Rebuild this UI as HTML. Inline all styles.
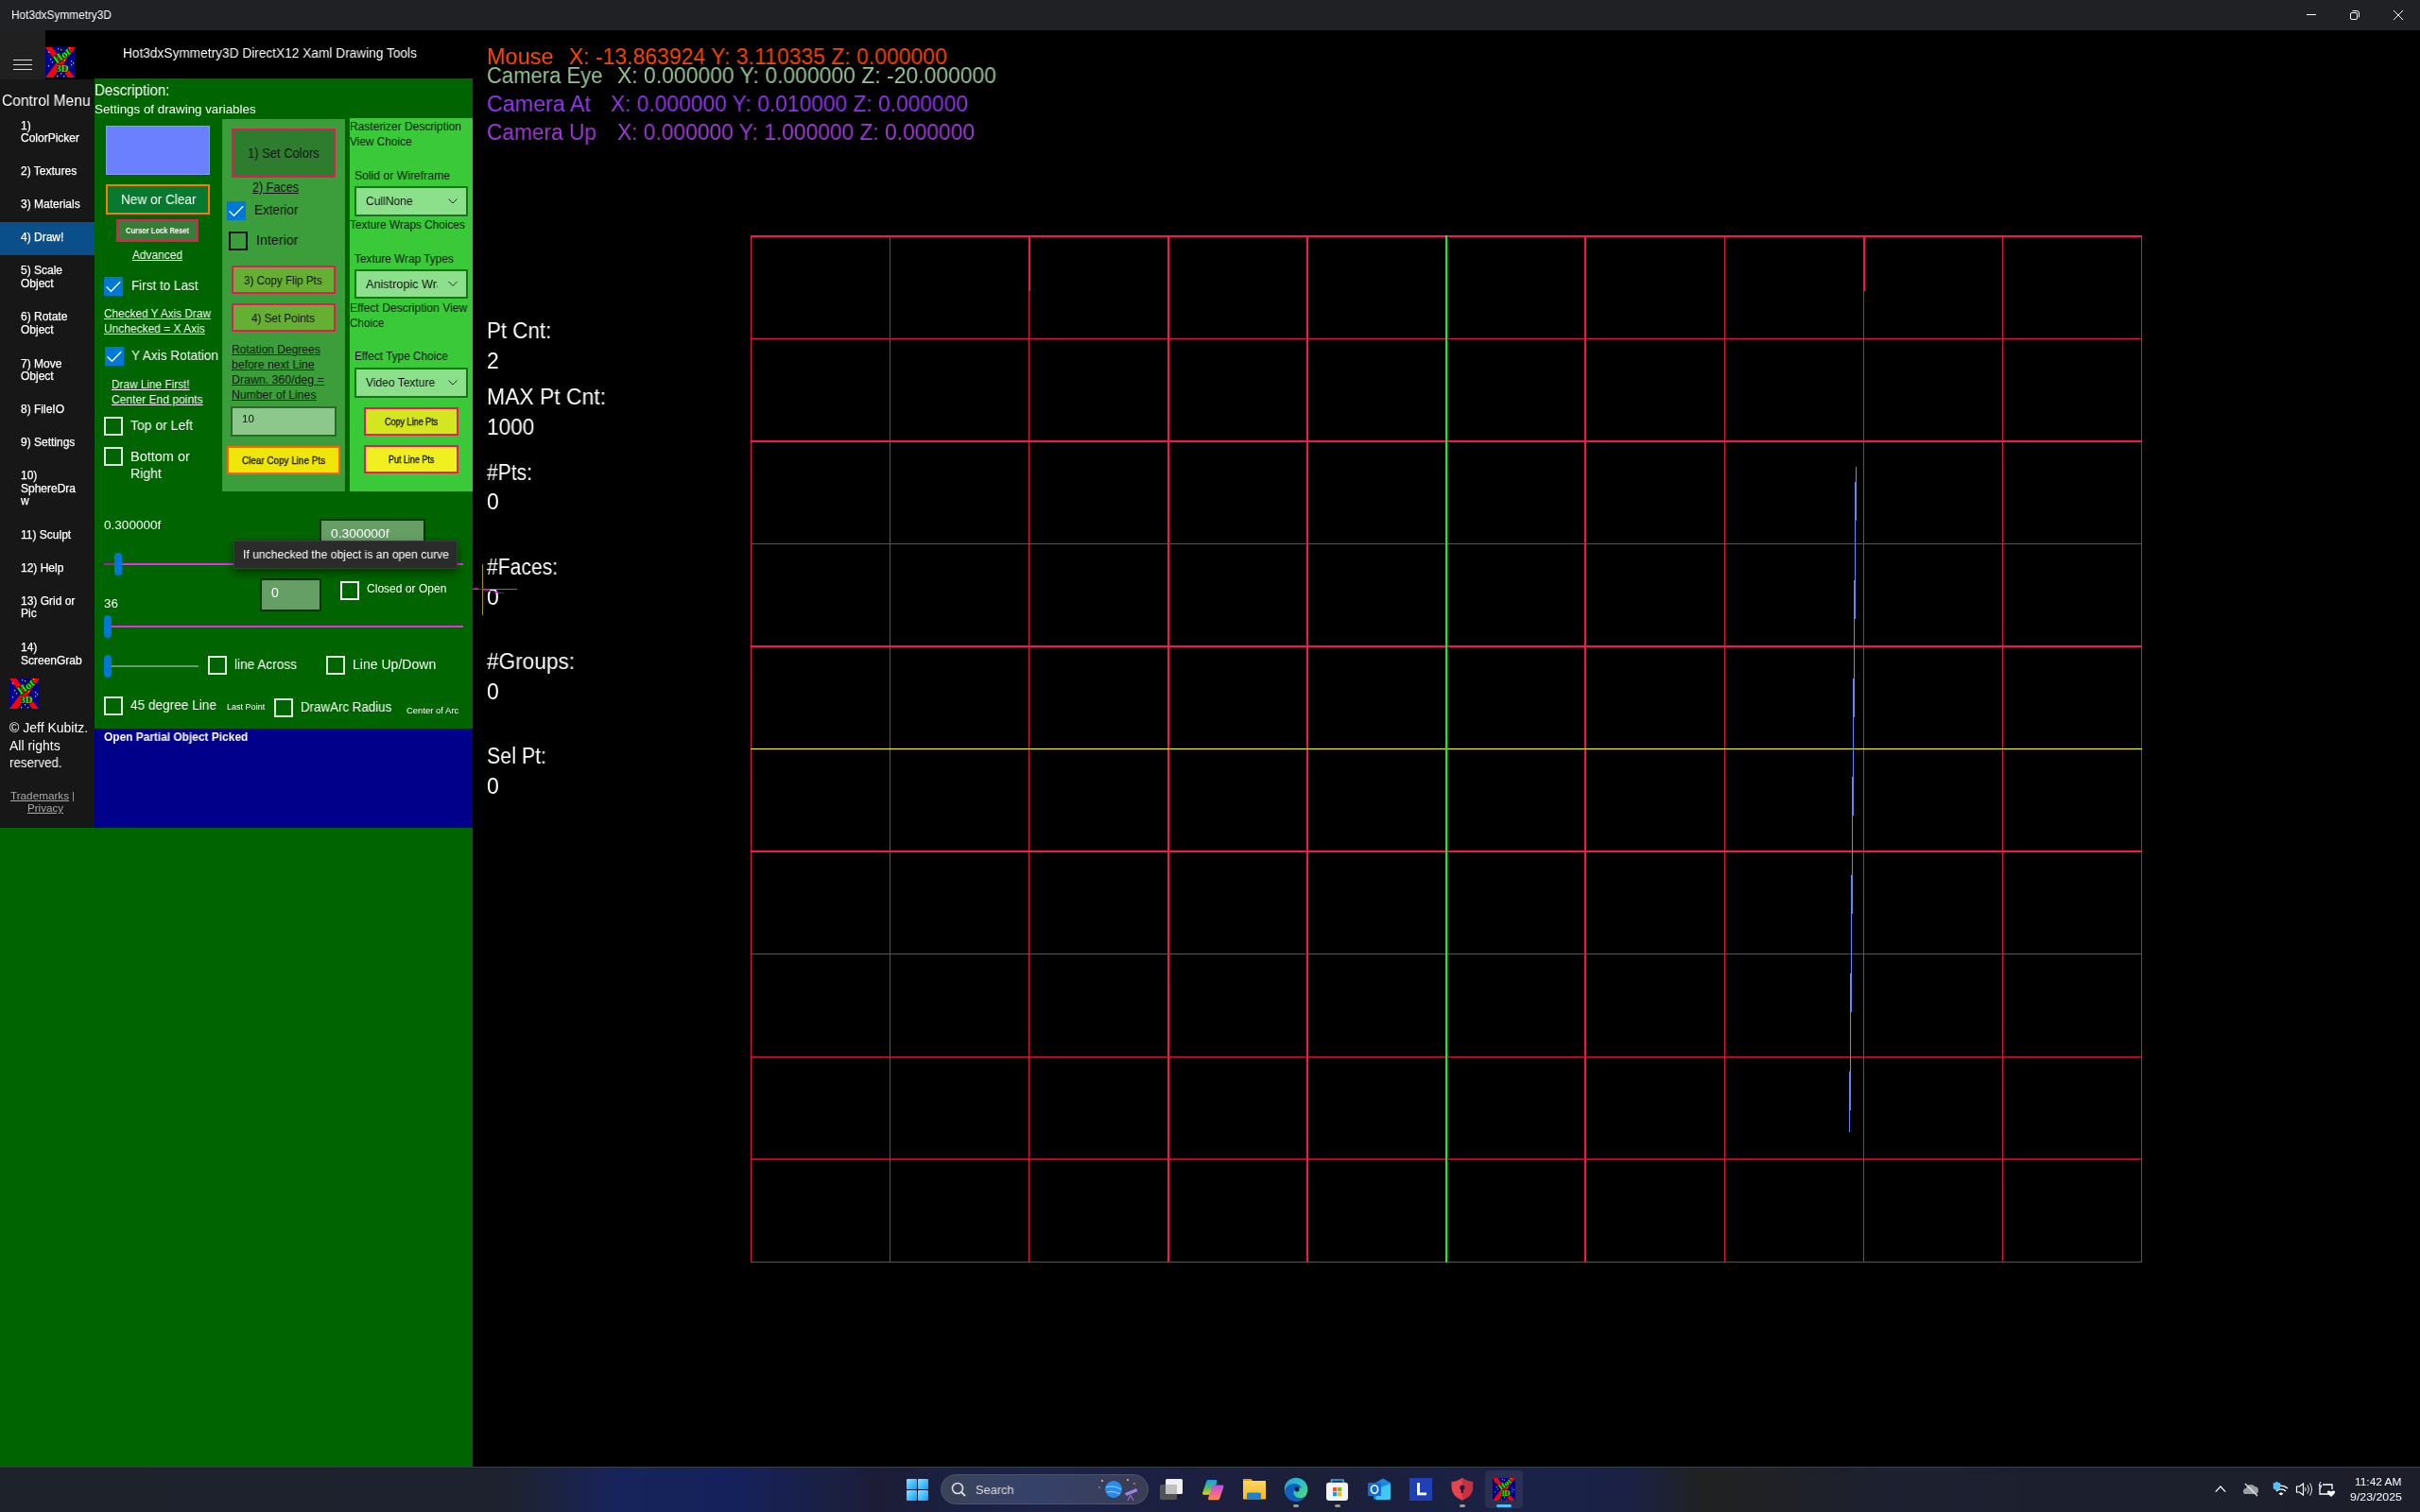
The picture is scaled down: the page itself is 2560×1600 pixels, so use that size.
<!DOCTYPE html><html><head><meta charset="utf-8"><style>
html,body{margin:0;padding:0;width:2560px;height:1600px;overflow:hidden;background:#000}
body{position:relative;font-family:"Liberation Sans",sans-serif}
.a{position:absolute}
.t{position:absolute;white-space:nowrap;line-height:1;transform-origin:0 0;will-change:transform}
</style></head><body>
<div class="a" style="left:0px;top:0px;width:2560px;height:32px;background:#202124"></div>
<div class="t" style="left:12px;top:10px;font-size:12.5px;color:#fff;transform:scaleX(0.9478);">Hot3dxSymmetry3D</div>
<svg class="a" style="left:2430px;top:0;width:130px;height:32px" viewBox="2430 0 130 32">
<line x1="2440" y1="15.5" x2="2450" y2="15.5" stroke="#fff" stroke-width="1"/>
<rect x="2486.5" y="13.5" width="7" height="7" rx="1.5" fill="none" stroke="#fff" stroke-width="1"/>
<path d="M2488.5 11.5 h4.5 a2.5 2.5 0 0 1 2.5 2.5 v4.5" fill="none" stroke="#fff" stroke-width="1"/>
<path d="M2532 11 L2542 21 M2542 11 L2532 21" stroke="#fff" stroke-width="1"/>
</svg>
<div class="a" style="left:0px;top:32px;width:48px;height:52px;background:#202020"></div>
<div class="a" style="left:0px;top:84px;width:100px;height:792px;background:#171717"></div>
<svg class="a" style="left:0;top:32px;width:48px;height:51px" viewBox="0 32 48 51">
<path d="M14 63.5 H34 M14 68.5 H34 M14 73.5 H34" stroke="#ddd" stroke-width="1"/></svg>
<svg class="a" style="left:48px;top:50px;width:32px;height:32px" viewBox="0 0 32 32">
<rect width="32" height="32" fill="#00008c"/>
<polygon points="0,0 7,0 31,32 24,32" fill="#ff0000"/>
<polygon points="24,0 32,0 8,32 0,32" fill="#ff0000"/>
<g fill="#ffee00"><circle cx="13.7" cy="1.8" r=".7"/><circle cx="16.7" cy="2.7" r=".7"/><circle cx="3.7" cy="5.3" r=".7"/><circle cx="3.5" cy="19.7" r=".7"/><circle cx="5.7" cy="12.8" r=".7"/><circle cx="7.5" cy="15.8" r=".7"/><circle cx="20.5" cy="13.7" r=".7"/><circle cx="27.7" cy="14.7" r=".7"/><circle cx="29.7" cy="16.7" r=".7"/><circle cx="27.7" cy="18.7" r=".7"/><circle cx="16.7" cy="27.7" r=".7"/><circle cx="12.7" cy="30.7" r=".7"/><circle cx="19.7" cy="30.7" r=".7"/><circle cx="25.7" cy="0.8" r=".7"/></g>
<g font-family="Liberation Serif" font-weight="bold" fill="#00ff00" stroke="#000" stroke-width="1" paint-order="stroke">
<text x="17.5" y="13" font-size="12" text-anchor="middle" transform="rotate(-35 17 9)">Hot</text>
<text x="18" y="25.5" font-size="11" text-anchor="middle" letter-spacing="-.2">3D</text>
</g>
</svg>
<div class="t" style="left:2px;top:99px;font-size:16px;color:#fff;transform:scaleX(0.9745);">Control Menu</div>
<div class="a" style="left:0px;top:235px;width:100px;height:35px;background:#0b4f8a"></div>
<div class="t" style="left:22px;top:127px;font-size:12px;color:#fff;-webkit-text-stroke:.25px #fff">1)</div>
<div class="t" style="left:22px;top:140px;font-size:12px;color:#fff;-webkit-text-stroke:.25px #fff">ColorPicker</div>
<div class="t" style="left:22px;top:175px;font-size:12px;color:#fff;-webkit-text-stroke:.25px #fff">2) Textures</div>
<div class="t" style="left:22px;top:210px;font-size:12px;color:#fff;-webkit-text-stroke:.25px #fff">3) Materials</div>
<div class="t" style="left:22px;top:245px;font-size:12px;color:#fff;-webkit-text-stroke:.25px #fff">4) Draw!</div>
<div class="t" style="left:22px;top:280px;font-size:12px;color:#fff;-webkit-text-stroke:.25px #fff">5) Scale</div>
<div class="t" style="left:22px;top:294px;font-size:12px;color:#fff;-webkit-text-stroke:.25px #fff">Object</div>
<div class="t" style="left:22px;top:329px;font-size:12px;color:#fff;-webkit-text-stroke:.25px #fff">6) Rotate</div>
<div class="t" style="left:22px;top:343px;font-size:12px;color:#fff;-webkit-text-stroke:.25px #fff">Object</div>
<div class="t" style="left:22px;top:379px;font-size:12px;color:#fff;-webkit-text-stroke:.25px #fff">7) Move</div>
<div class="t" style="left:22px;top:392px;font-size:12px;color:#fff;-webkit-text-stroke:.25px #fff">Object</div>
<div class="t" style="left:22px;top:427px;font-size:12px;color:#fff;-webkit-text-stroke:.25px #fff">8) FileIO</div>
<div class="t" style="left:22px;top:462px;font-size:12px;color:#fff;-webkit-text-stroke:.25px #fff">9) Settings</div>
<div class="t" style="left:22px;top:497px;font-size:12px;color:#fff;-webkit-text-stroke:.25px #fff">10)</div>
<div class="t" style="left:22px;top:511px;font-size:12px;color:#fff;-webkit-text-stroke:.25px #fff">SphereDra</div>
<div class="t" style="left:22px;top:524px;font-size:12px;color:#fff;-webkit-text-stroke:.25px #fff">w</div>
<div class="t" style="left:22px;top:560px;font-size:12px;color:#fff;-webkit-text-stroke:.25px #fff">11) Sculpt</div>
<div class="t" style="left:22px;top:595px;font-size:12px;color:#fff;-webkit-text-stroke:.25px #fff">12) Help</div>
<div class="t" style="left:22px;top:630px;font-size:12px;color:#fff;-webkit-text-stroke:.25px #fff">13) Grid or</div>
<div class="t" style="left:22px;top:643px;font-size:12px;color:#fff;-webkit-text-stroke:.25px #fff">Pic</div>
<div class="t" style="left:22px;top:679px;font-size:12px;color:#fff;-webkit-text-stroke:.25px #fff">14)</div>
<div class="t" style="left:22px;top:693px;font-size:12px;color:#fff;-webkit-text-stroke:.25px #fff">ScreenGrab</div>
<svg class="a" style="left:10px;top:718px;width:32px;height:32px" viewBox="0 0 32 32">
<rect width="32" height="32" fill="#00008c"/>
<polygon points="0,0 7,0 31,32 24,32" fill="#ff0000"/>
<polygon points="24,0 32,0 8,32 0,32" fill="#ff0000"/>
<g fill="#ffee00"><circle cx="13.7" cy="1.8" r=".7"/><circle cx="16.7" cy="2.7" r=".7"/><circle cx="3.7" cy="5.3" r=".7"/><circle cx="3.5" cy="19.7" r=".7"/><circle cx="5.7" cy="12.8" r=".7"/><circle cx="7.5" cy="15.8" r=".7"/><circle cx="20.5" cy="13.7" r=".7"/><circle cx="27.7" cy="14.7" r=".7"/><circle cx="29.7" cy="16.7" r=".7"/><circle cx="27.7" cy="18.7" r=".7"/><circle cx="16.7" cy="27.7" r=".7"/><circle cx="12.7" cy="30.7" r=".7"/><circle cx="19.7" cy="30.7" r=".7"/><circle cx="25.7" cy="0.8" r=".7"/></g>
<g font-family="Liberation Serif" font-weight="bold" fill="#00ff00" stroke="#000" stroke-width="1" paint-order="stroke">
<text x="17.5" y="13" font-size="12" text-anchor="middle" transform="rotate(-35 17 9)">Hot</text>
<text x="18" y="25.5" font-size="11" text-anchor="middle" letter-spacing="-.2">3D</text>
</g>
</svg>
<div class="t" style="left:10px;top:763px;font-size:14px;color:#fff;">&copy; Jeff Kubitz.</div>
<div class="t" style="left:10px;top:782px;font-size:14px;color:#fff;">All rights</div>
<div class="t" style="left:10px;top:800px;font-size:14px;color:#fff;transform:scaleX(0.9510);">reserved.</div>
<div class="t" style="left:11px;top:837px;font-size:11px;color:#aaa;text-decoration:underline;transform:scaleX(1.0640);">Trademarks</div>
<div class="t" style="left:76px;top:837px;font-size:11px;color:#aaa;">|</div>
<div class="t" style="left:29px;top:850px;font-size:11px;color:#aaa;text-decoration:underline;transform:scaleX(1.0537);">Privacy</div>
<div class="t" style="left:130px;top:49px;font-size:14px;color:#fff;transform:scaleX(0.9781);">Hot3dxSymmetry3D DirectX12 Xaml Drawing Tools</div>
<div class="a" style="left:100px;top:83px;width:400px;height:688px;background:#006400"></div>
<div class="a" style="left:100px;top:771px;width:400px;height:105px;background:#00008b"></div>
<div class="a" style="left:0px;top:876px;width:500px;height:676px;background:#006400"></div>
<div class="t" style="left:100px;top:88px;font-size:16px;color:#fff;transform:scaleX(0.9399);">Description:</div>
<div class="t" style="left:100px;top:109px;font-size:13px;color:#fff;transform:scaleX(1.0264);">Settings of drawing variables</div>
<div class="a" style="left:112px;top:133px;width:110px;height:52px;box-sizing:border-box;background:#6a80ff;border:1px solid #8a9cff"></div>
<div class="a" style="left:112px;top:195px;width:110px;height:32px;box-sizing:border-box;background:#087a30;border:2px solid #ff7800"></div>
<div class="t" style="left:127.5px;top:204px;font-size:14px;color:#fff;transform:scaleX(0.9732);">New or Clear</div>
<div class="a" style="left:123px;top:232px;width:87px;height:24px;box-sizing:border-box;background:#387d38;border:2px solid #e8185a"></div>
<div class="t" style="left:132.8px;top:240px;font-size:8.5px;color:#fff;font-weight:bold;transform:scaleX(0.8865);">Cursor Lock Reset</div>
<div class="t" style="left:140.4px;top:264px;font-size:12.5px;color:#fff;text-decoration:underline;transform:scaleX(0.9533);">Advanced</div>
<svg class="a" style="left:110px;top:293px;width:20px;height:20px" viewBox="0 0 20 20"><rect width="20" height="20" fill="#0078d7"/><path d="M2.6 10.4 L7.5 15.2 L17.2 5.3" fill="none" stroke="#fff" stroke-width="1.4"/></svg>
<div class="t" style="left:138.5px;top:295px;font-size:14.5px;color:#fff;transform:scaleX(0.9308);">First to Last</div>
<div class="t" style="left:110px;top:326px;font-size:12.5px;color:#fff;text-decoration:underline;transform:scaleX(0.9437);">Checked Y Axis Draw</div>
<div class="t" style="left:110px;top:342px;font-size:12.5px;color:#fff;text-decoration:underline;transform:scaleX(0.9577);">Unchecked = X Axis</div>
<svg class="a" style="left:111px;top:367px;width:20px;height:20px" viewBox="0 0 20 20"><rect width="20" height="20" fill="#0078d7"/><path d="M2.6 10.4 L7.5 15.2 L17.2 5.3" fill="none" stroke="#fff" stroke-width="1.4"/></svg>
<div class="t" style="left:139px;top:368px;font-size:15px;color:#fff;transform:scaleX(0.9068);">Y Axis Rotation</div>
<div class="t" style="left:118px;top:401px;font-size:12.5px;color:#fff;text-decoration:underline;transform:scaleX(0.9449);">Draw Line First!</div>
<div class="t" style="left:118px;top:417px;font-size:12.5px;color:#fff;text-decoration:underline;transform:scaleX(0.9654);">Center End points</div>
<div class="a" style="left:110px;top:441px;width:20px;height:20px;box-sizing:border-box;border:2px solid #dfe8df"></div>
<div class="t" style="left:138px;top:443px;font-size:14.5px;color:#fff;transform:scaleX(0.9633);">Top or Left</div>
<div class="a" style="left:110px;top:473px;width:20px;height:20px;box-sizing:border-box;border:2px solid #dfe8df"></div>
<div class="t" style="left:138px;top:476px;font-size:14.5px;color:#fff;transform:scaleX(0.9927);">Bottom or</div>
<div class="t" style="left:138px;top:494px;font-size:14.5px;color:#fff;transform:scaleX(0.9719);">Right</div>
<div class="a" style="left:235px;top:126px;width:130px;height:394px;background:#3b9e3b"></div>
<div class="a" style="left:245px;top:136px;width:110px;height:52px;box-sizing:border-box;background:#2e7d2e;border:2px solid #e8185a"></div>
<div class="t" style="left:262px;top:154px;font-size:15px;color:#111;transform:scaleX(0.8648);">1) Set Colors</div>
<div class="t" style="left:267px;top:191px;font-size:14px;color:#111;text-decoration:underline;transform:scaleX(0.8997);">2) Faces</div>
<svg class="a" style="left:240px;top:213px;width:20px;height:20px" viewBox="0 0 20 20"><rect width="20" height="20" fill="#0078d7"/><path d="M2.6 10.4 L7.5 15.2 L17.2 5.3" fill="none" stroke="#fff" stroke-width="1.4"/></svg>
<div class="t" style="left:268.7px;top:215px;font-size:14.5px;color:#111;transform:scaleX(0.9268);">Exterior</div>
<div class="a" style="left:242px;top:245px;width:20px;height:20px;box-sizing:border-box;border:2px solid #111"></div>
<div class="t" style="left:270.5px;top:247px;font-size:14.5px;color:#111;transform:scaleX(0.9860);">Interior</div>
<div class="a" style="left:245px;top:281px;width:110px;height:30px;box-sizing:border-box;background:#65b033;border:2px solid #e8185a"></div>
<div class="t" style="left:258.4px;top:290px;font-size:13px;color:#111;transform:scaleX(0.8943);">3) Copy Flip Pts</div>
<div class="a" style="left:245px;top:321px;width:110px;height:30px;box-sizing:border-box;background:#65b033;border:2px solid #e8185a"></div>
<div class="t" style="left:266px;top:330px;font-size:13px;color:#111;transform:scaleX(0.8989);">4) Set Points</div>
<div class="t" style="left:245px;top:364px;font-size:12.5px;color:#111;text-decoration:underline;transform:scaleX(0.9642);">Rotation Degrees</div>
<div class="t" style="left:245px;top:380px;font-size:12.5px;color:#111;text-decoration:underline;transform:scaleX(0.9760);">before next Line</div>
<div class="t" style="left:245px;top:396px;font-size:12.5px;color:#111;text-decoration:underline;transform:scaleX(0.9876);">Drawn. 360/deg =</div>
<div class="t" style="left:245px;top:412px;font-size:12.5px;color:#111;text-decoration:underline;transform:scaleX(0.9759);">Number of Lines</div>
<div class="a" style="left:244px;top:430px;width:112px;height:32px;box-sizing:border-box;background:#8cc88c;border:2px solid #2a6a2a"></div>
<div class="t" style="left:256px;top:438px;font-size:11.5px;color:#111;">10</div>
<div class="a" style="left:240px;top:472px;width:120px;height:30px;box-sizing:border-box;background:#f0e60a;border:2px solid #ff6208"></div>
<div class="t" style="left:256px;top:482px;font-size:10.5px;color:#111;transform:scaleX(0.9424);-webkit-text-stroke:.3px #111">Clear Copy Line Pts</div>
<div class="a" style="left:370px;top:125px;width:130px;height:395px;background:#39c939"></div>
<div class="t" style="left:370px;top:128px;font-size:12.5px;color:#111;transform:scaleX(0.9597);">Rasterizer Description</div>
<div class="t" style="left:370px;top:144px;font-size:12.5px;color:#111;transform:scaleX(0.9487);">View Choice</div>
<div class="t" style="left:375px;top:180px;font-size:12.5px;color:#111;transform:scaleX(0.9758);">Solid or Wireframe</div>
<div class="a" style="left:375px;top:197px;width:120px;height:32px;box-sizing:border-box;background:#8ce08c;border:2px solid #1c721c"></div>
<div class="t" style="left:387px;top:206px;font-size:13px;color:#111;transform:scaleX(0.9275);">CullNone</div>
<svg class="a" style="left:470px;top:197px;width:20px;height:32px" viewBox="0 0 20 32"><path d="M4.5 13.5 L9 18.0 L13.5 13.5" fill="none" stroke="#243024" stroke-width="1"/></svg>
<div class="t" style="left:370px;top:232px;font-size:12.5px;color:#111;transform:scaleX(0.9443);">Texture Wraps Choices</div>
<div class="t" style="left:375px;top:268px;font-size:12.5px;color:#111;transform:scaleX(0.9467);">Texture Wrap Types</div>
<div class="a" style="left:375px;top:285px;width:120px;height:31px;box-sizing:border-box;background:#8ce08c;border:2px solid #1c721c"></div>
<div class="a" style="left:387px;top:285px;width:76px;height:31px;overflow:hidden">
<div class="t" style="left:0px;top:9px;font-size:13px;color:#111;transform:scaleX(0.9725);">Anistropic Wrap</div>
</div>
<svg class="a" style="left:470px;top:285px;width:20px;height:31px" viewBox="0 0 20 31"><path d="M4.5 13.0 L9 17.5 L13.5 13.0" fill="none" stroke="#243024" stroke-width="1"/></svg>
<div class="t" style="left:370px;top:320px;font-size:12.5px;color:#111;transform:scaleX(0.9705);">Effect Description View</div>
<div class="t" style="left:370px;top:336px;font-size:12.5px;color:#111;transform:scaleX(0.9329);">Choice</div>
<div class="t" style="left:375px;top:371px;font-size:12.5px;color:#111;transform:scaleX(0.9458);">Effect Type Choice</div>
<div class="a" style="left:375px;top:389px;width:120px;height:32px;box-sizing:border-box;background:#8ce08c;border:2px solid #1c721c"></div>
<div class="t" style="left:387px;top:398px;font-size:13px;color:#111;transform:scaleX(0.9263);">Video Texture</div>
<svg class="a" style="left:470px;top:389px;width:20px;height:32px" viewBox="0 0 20 32"><path d="M4.5 13.5 L9 18.0 L13.5 13.5" fill="none" stroke="#243024" stroke-width="1"/></svg>
<div class="a" style="left:385px;top:431px;width:100px;height:30px;box-sizing:border-box;background:#d4e620;border:2px solid #e8185a"></div>
<div class="t" style="left:407.1px;top:442px;font-size:10px;color:#111;transform:scaleX(0.9027);-webkit-text-stroke:.3px #111">Copy Line Pts</div>
<div class="a" style="left:385px;top:471px;width:100px;height:30px;box-sizing:border-box;background:#f0f020;border:2px solid #e8185a"></div>
<div class="t" style="left:411.3px;top:482px;font-size:10px;color:#111;transform:scaleX(0.8939);-webkit-text-stroke:.3px #111">Put Line Pts</div>
<div class="t" style="left:110px;top:549px;font-size:13px;color:#fff;transform:scaleX(1.0426);">0.300000f</div>
<div class="a" style="left:338px;top:549px;width:112px;height:34px;box-sizing:border-box;background:#669f66;border:2px solid #003300"></div>
<div class="t" style="left:350px;top:558px;font-size:13.5px;color:#fff;transform:scaleX(1.0257);">0.300000f</div>
<div class="a" style="left:110px;top:596px;width:380px;height:2px;background:#ea2ceb"></div>
<div class="a" style="left:110px;top:596px;width:11px;height:2px;background:#9a2aa2"></div>
<div class="a" style="left:121px;top:585px;width:8px;height:24px;background:#0078d7;border-radius:4px"></div>
<div class="a" style="left:275px;top:612px;width:65px;height:35px;box-sizing:border-box;background:#669f66;border:2px solid #003300"></div>
<div class="t" style="left:287px;top:620px;font-size:14px;color:#fff;">0</div>
<div class="a" style="left:360px;top:615px;width:20px;height:20px;box-sizing:border-box;border:2px solid #fff"></div>
<div class="t" style="left:388px;top:617px;font-size:12px;color:#fff;transform:scaleX(1.0042);">Closed or Open</div>
<div class="t" style="left:110px;top:632px;font-size:13px;color:#fff;transform:scaleX(1.0235);">36</div>
<div class="a" style="left:110px;top:662px;width:380px;height:2px;background:#ea2ceb"></div>
<div class="a" style="left:110px;top:651px;width:8px;height:24px;background:#0078d7;border-radius:4px"></div>
<div class="a" style="left:110px;top:704px;width:100px;height:2px;background:#6a9a6a"></div>
<div class="a" style="left:110px;top:693px;width:8px;height:24px;background:#0078d7;border-radius:4px"></div>
<div class="a" style="left:220px;top:694px;width:20px;height:20px;box-sizing:border-box;border:2px solid #dfe8df"></div>
<div class="t" style="left:248px;top:696px;font-size:14px;color:#fff;transform:scaleX(0.9734);">line Across</div>
<div class="a" style="left:345px;top:694px;width:20px;height:20px;box-sizing:border-box;border:2px solid #dfe8df"></div>
<div class="t" style="left:373px;top:696px;font-size:14px;color:#fff;transform:scaleX(1.0030);">Line Up/Down</div>
<div class="a" style="left:110px;top:737px;width:20px;height:20px;box-sizing:border-box;border:2px solid #dfe8df"></div>
<div class="t" style="left:138px;top:739px;font-size:14px;color:#fff;transform:scaleX(0.9731);">45 degree Line</div>
<div class="t" style="left:239.7px;top:744px;font-size:8.5px;color:#fff;transform:scaleX(1.0634);">Last Point</div>
<div class="a" style="left:290px;top:739px;width:20px;height:20px;box-sizing:border-box;border:2px solid #dfe8df"></div>
<div class="t" style="left:318.4px;top:741px;font-size:14px;color:#fff;transform:scaleX(0.9511);">DrawArc Radius</div>
<div class="t" style="left:429.7px;top:748px;font-size:8.5px;color:#fff;transform:scaleX(1.1148);">Center of Arc</div>
<div class="t" style="left:110px;top:774px;font-size:12px;color:#fff;font-weight:bold;transform:scaleX(0.9922);">Open Partial Object Picked</div>
<div class="a" style="left:247px;top:572px;width:237px;height:30px;box-sizing:border-box;background:#2b2b2b;border:1px solid #3c3c3c;box-shadow:0 4px 10px rgba(0,0,0,.45)"></div>
<div class="t" style="left:256.5px;top:581px;font-size:12.5px;color:#fff;transform:scaleX(0.9743);">If unchecked the object is an open curve</div>
<div class="t" style="left:515px;top:49px;font-size:23px;color:#ff4500;transform:scaleX(1.0212);">Mouse</div>
<div class="t" style="left:602px;top:49px;font-size:23px;color:#ff4500;transform:scaleX(0.9982);">X: -13.863924 Y: 3.110335 Z: 0.000000</div>
<div class="t" style="left:515px;top:69px;font-size:23px;color:#95c495;transform:scaleX(0.9583);">Camera Eye</div>
<div class="t" style="left:653px;top:69px;font-size:23px;color:#95c495;transform:scaleX(0.9965);">X: 0.000000 Y: 0.000000 Z: -20.000000</div>
<div class="t" style="left:515px;top:99px;font-size:23px;color:#9232ee;transform:scaleX(1.0123);">Camera At</div>
<div class="t" style="left:646px;top:99px;font-size:23px;color:#9232ee;transform:scaleX(0.9896);">X: 0.000000 Y: 0.010000 Z: 0.000000</div>
<div class="t" style="left:515px;top:129px;font-size:23px;color:#a03ad8;transform:scaleX(0.9864);">Camera Up</div>
<div class="t" style="left:653px;top:129px;font-size:23px;color:#a03ad8;transform:scaleX(0.9896);">X: 0.000000 Y: 1.000000 Z: 0.000000</div>
<div class="t" style="left:515px;top:339px;font-size:23px;color:#fff;transform:scaleX(0.9715);">Pt Cnt:</div>
<div class="t" style="left:515px;top:371px;font-size:23px;color:#fff;">2</div>
<div class="t" style="left:515px;top:409px;font-size:23px;color:#fff;transform:scaleX(0.9958);">MAX Pt Cnt:</div>
<div class="t" style="left:515px;top:441px;font-size:23px;color:#fff;transform:scaleX(0.9850);">1000</div>
<div class="t" style="left:515px;top:489px;font-size:23px;color:#fff;transform:scaleX(0.9158);">#Pts:</div>
<div class="t" style="left:515px;top:520px;font-size:23px;color:#fff;">0</div>
<div class="t" style="left:515px;top:589px;font-size:23px;color:#fff;transform:scaleX(0.9167);">#Faces:</div>
<div class="t" style="left:515px;top:621px;font-size:23px;color:#fff;">0</div>
<div class="t" style="left:515px;top:689px;font-size:23px;color:#fff;transform:scaleX(0.9830);">#Groups:</div>
<div class="t" style="left:515px;top:721px;font-size:23px;color:#fff;">0</div>
<div class="t" style="left:515px;top:789px;font-size:23px;color:#fff;transform:scaleX(0.9298);">Sel Pt:</div>
<div class="t" style="left:515px;top:821px;font-size:23px;color:#fff;">0</div>
<svg class="a" style="left:495px;top:590px;width:60px;height:65px" viewBox="495 590 60 65">
<rect x="510" y="597" width="1" height="54" fill="#a09400"/>
<rect x="500" y="623" width="47" height="1" fill="#00a0a0"/>
<path d="M500 621h1v1h5v1h5v1h6v1h5v1h5v1h6v1h-6v-1h-5v-1h-5v-1h-6v-1h-5v-1h-5v-1h-1z" fill="#a000a0" shape-rendering="crispEdges"/>
</svg>
<svg class="a" style="left:0;top:0;width:2560px;height:1600px" viewBox="0 0 2560 1600" shape-rendering="crispEdges">
<rect x="794" y="249" width="1" height="1087" fill="#dc1640"/>
<rect x="941" y="249" width="1" height="1087" fill="#dc1640"/>
<rect x="1088" y="249" width="1" height="1087" fill="#dc1640"/>
<rect x="1235" y="249" width="2" height="1087" fill="#f5184a"/>
<rect x="1382" y="249" width="2" height="1087" fill="#f5184a"/>
<rect x="1676" y="249" width="2" height="1087" fill="#f5184a"/>
<rect x="1824" y="249" width="1" height="1087" fill="#dc1640"/>
<rect x="1971" y="249" width="1" height="1087" fill="#dc1640"/>
<rect x="2118" y="249" width="1" height="1087" fill="#dc1640"/>
<rect x="2265" y="249" width="1" height="1087" fill="#dc1640"/>
<rect x="794" y="249" width="1472" height="2" fill="#f5184a"/>
<rect x="794" y="358" width="1472" height="1" fill="#dc1640"/>
<rect x="794" y="466" width="1472" height="2" fill="#f5184a"/>
<rect x="794" y="575" width="1472" height="1" fill="#dc1640"/>
<rect x="794" y="683" width="1472" height="2" fill="#f5184a"/>
<rect x="794" y="900" width="1472" height="2" fill="#f5184a"/>
<rect x="794" y="1009" width="1472" height="1" fill="#dc1640"/>
<rect x="794" y="1118" width="1472" height="1" fill="#dc1640"/>
<rect x="794" y="1226" width="1472" height="1" fill="#dc1640"/>
<rect x="794" y="1335" width="1472" height="1" fill="#dc1640"/>
<rect x="1088" y="250" width="2" height="58" fill="#f5184a"/>
<rect x="1971" y="250" width="2" height="58" fill="#f5184a"/>
<rect x="794" y="792" width="1472" height="1" fill="#ffff00"/>
<rect x="1529" y="249" width="2" height="1087" fill="#00ff00"/>
</svg>
<svg class="a" style="left:1940px;top:490px;width:40px;height:720px" viewBox="1940 490 40 720" shape-rendering="crispEdges"><g fill="#6a84ff"><rect x="1963" y="494" width="1" height="16"/><rect x="1962" y="510" width="2" height="41"/><rect x="1962" y="551" width="1" height="63"/><rect x="1961" y="614" width="2" height="41"/><rect x="1961" y="655" width="1" height="63"/><rect x="1960" y="718" width="2" height="41"/><rect x="1960" y="759" width="1" height="63"/><rect x="1959" y="822" width="2" height="41"/><rect x="1959" y="863" width="1" height="63"/><rect x="1958" y="926" width="2" height="41"/><rect x="1958" y="967" width="1" height="63"/><rect x="1957" y="1030" width="2" height="41"/><rect x="1957" y="1071" width="1" height="63"/><rect x="1956" y="1134" width="2" height="41"/><rect x="1956" y="1175" width="1" height="23"/></g></svg>
<div class="a" style="left:0px;top:1552px;width:2560px;height:48px;background:linear-gradient(90deg,#1e222a 0px,#1e2230 540px,#17245a 650px,#15215a 780px,#1a2042 880px,#1d1c36 930px,#1a2040 1000px,#1c2348 1100px,#1b2040 1250px,#1b1f38 1400px,#1a2248 1640px,#1b2145 1720px,#212121 1800px,#1f2128 1900px,#1c2030 2000px,#1c1f2a 2560px)"></div>
<div class="a" style="left:0px;top:1552px;width:2560px;height:1px;background:#3a3e48"></div>
<svg class="a" style="left:940px;top:1552px;width:680px;height:48px" viewBox="940 1552 680 48">
<defs>
<linearGradient id="wg" x1="0" y1="0" x2="1" y2="1"><stop offset="0" stop-color="#86e6ff"/><stop offset="1" stop-color="#0a9cff"/></linearGradient>
<linearGradient id="sg" x1="0" y1="0" x2="1" y2="0"><stop offset="0" stop-color="#3b4358"/><stop offset=".45" stop-color="#36416a"/><stop offset="1" stop-color="#3a3d55"/></linearGradient>
<linearGradient id="eg" x1="0" y1="0" x2="1" y2="1"><stop offset="0" stop-color="#2aa0e0"/><stop offset=".5" stop-color="#30c0c0"/><stop offset="1" stop-color="#60e060"/></linearGradient>
<linearGradient id="cgl" x1="0" y1="0" x2="0" y2="1"><stop offset="0" stop-color="#1a9cf0"/><stop offset=".55" stop-color="#50c060"/><stop offset="1" stop-color="#f0d010"/></linearGradient><linearGradient id="cgr" x1="0" y1="0" x2="0" y2="1"><stop offset="0" stop-color="#b050f0"/><stop offset=".5" stop-color="#f060a0"/><stop offset="1" stop-color="#ff9040"/></linearGradient>
<linearGradient id="fg" x1="0" y1="0" x2="0" y2="1"><stop offset="0" stop-color="#ffd766"/><stop offset="1" stop-color="#f8b820"/></linearGradient>
</defs>
<g fill="url(#wg)"><rect x="959" y="1565" width="11" height="11" rx="1"/><rect x="971" y="1565" width="11" height="11" rx="1"/><rect x="959" y="1577" width="11" height="11" rx="1"/><rect x="971" y="1577" width="11" height="11" rx="1"/></g>
<rect x="995.5" y="1560.5" width="219" height="31" rx="15.5" fill="url(#sg)" stroke="#4d5468" stroke-width="1"/>
<circle cx="1013" cy="1575" r="5.5" fill="none" stroke="#ddd" stroke-width="1.6"/><path d="M1017 1579 L1021 1583" stroke="#ddd" stroke-width="1.8"/>
<circle cx="1178" cy="1576" r="9" fill="#2a8ae8"/><path d="M1170 1574 q8 -3 16 2 M1171 1579 q7 -2 14 2" stroke="#7cc8ff" stroke-width="1.2" fill="none"/>
<path d="M1190 1580 l12 -5 l1.5 3 l-12 5z" fill="#a080e0"/><path d="M1196 1582 l-3 6 M1196 1582 l3 6" stroke="#a080e0" stroke-width="1"/>
<g fill="#ffd040"><circle cx="1166" cy="1567" r="1"/><circle cx="1193" cy="1566" r="1"/><circle cx="1200" cy="1570" r=".8"/><circle cx="1163" cy="1574" r=".7"/></g>
<rect x="1233" y="1565" width="18" height="16" rx="1.5" fill="#f0f0f0"/>
<rect x="1227" y="1571" width="18" height="16" rx="1.5" fill="#5a5a5a" fill-opacity=".9"/>
<rect x="1233" y="1571" width="12" height="10" fill="#c0c0c0"/>
<path d="M1277.5 1566 h8.5 q2 0 1.4 2 l-4.2 12.2 q-.5 1.6 -2.2 1.6 h-7.5 q-2 0 -1.4 -2 l4.2 -12.2 q.5 -1.6 1.2 -1.6z" fill="url(#cgl)"/>
<path d="M1286.5 1571.5 h6.5 q2 0 1.4 2 l-4.2 12.2 q-.5 1.6 -2.2 1.6 h-8.5 q-2 0 -1.4 -2 l4.2 -12.2 q.5 -1.6 1.2 -1.6z" fill="url(#cgr)"/>
<path d="M1315 1565 h8 l2 2 h14 v19.6 h-24z" fill="url(#fg)"/><path d="M1315 1565 h8 l2 2 h-10z" fill="#e8a800"/>
<rect x="1319" y="1579.5" width="15" height="7" rx="1.5" fill="#1a80d8"/>
<circle cx="1371" cy="1576" r="12.3" fill="url(#eg)"/><path d="M1359 1578 q2 -8 10 -8 q6 0 8 5 q-5 -2 -8 2 q-2 4 2 7 q5 3 10 -1 q-3 6 -10 6 q-10 0 -12 -11z" fill="#1060c0"/>
<circle cx="1372" cy="1576" r="2.5" fill="#1b2040"/>
<rect x="1368" y="1592" width="6" height="3" rx="1.5" fill="#9a9a9a"/>
<rect x="1403" y="1568.7" width="23" height="19.2" rx="3" fill="#f4f4f4"/><path d="M1408.5 1569 v-3 h12.5 v3" fill="none" stroke="#30b8f0" stroke-width="1.6"/>
<rect x="1410" y="1574" width="4.2" height="4.2" fill="#f25022"/><rect x="1415" y="1574" width="4.2" height="4.2" fill="#7fba00"/><rect x="1410" y="1579" width="4.2" height="4.2" fill="#00a4ef"/><rect x="1415" y="1579" width="4.2" height="4.2" fill="#ffb900"/>
<rect x="1412" y="1592" width="6" height="3" rx="1.5" fill="#9a9a9a"/>
<path d="M1455 1569 l8 -4.5 l8 4.5 v16 q0 2 -2 2 h-14 q-2 0 -2 -2z" fill="#1a8ae0"/><path d="M1455 1576 l16 -6 v15 q0 2 -2 2 h-13z" fill="#40c8f0"/>
<rect x="1447" y="1569" width="14" height="14" rx="1" fill="#0f6cd0"/><ellipse cx="1454" cy="1576" rx="3.6" ry="4.2" fill="none" stroke="#fff" stroke-width="1.6"/>
<rect x="1491" y="1564" width="24" height="24" fill="#2040b8"/><path d="M1499 1569 h3 v10.5 h7 v2.7 h-10z" fill="#fff"/><path d="M1498 1582 l1 -3 v3z" fill="#0a2a50"/>
<path d="M1546.8 1564 q6 4 11.3 4 v6 q0 9 -11.3 13.7 q-11.3 -4.7 -11.3 -13.7 v-6 q5.3 0 11.3 -4z" fill="#e84450"/>
<path d="M1546.8 1564 q6 4 11.3 4 v6 q0 9 -11.3 13.7z" fill="#c8303e"/>
<circle cx="1546.8" cy="1574" r="2.6" fill="#1b2040"/><rect x="1545.6" y="1575" width="2.4" height="5" fill="#1b2040"/>
<rect x="1544" y="1592" width="6" height="3" rx="1.5" fill="#9a9a9a"/>
<rect x="1571" y="1556" width="40" height="40" rx="4" fill="#ffffff" fill-opacity=".07"/>
<rect x="1583" y="1592" width="16" height="3" rx="1.5" fill="#4cc2ff"/>
</svg>
<svg class="a" style="left:1579px;top:1564px;width:24px;height:24px" viewBox="0 0 32 32">
<rect width="32" height="32" fill="#00008c"/>
<polygon points="0,0 7,0 31,32 24,32" fill="#ff0000"/>
<polygon points="24,0 32,0 8,32 0,32" fill="#ff0000"/>
<g fill="#ffee00"><circle cx="13.7" cy="1.8" r=".7"/><circle cx="16.7" cy="2.7" r=".7"/><circle cx="3.7" cy="5.3" r=".7"/><circle cx="3.5" cy="19.7" r=".7"/><circle cx="5.7" cy="12.8" r=".7"/><circle cx="7.5" cy="15.8" r=".7"/><circle cx="20.5" cy="13.7" r=".7"/><circle cx="27.7" cy="14.7" r=".7"/><circle cx="29.7" cy="16.7" r=".7"/><circle cx="27.7" cy="18.7" r=".7"/><circle cx="16.7" cy="27.7" r=".7"/><circle cx="12.7" cy="30.7" r=".7"/><circle cx="19.7" cy="30.7" r=".7"/><circle cx="25.7" cy="0.8" r=".7"/></g>
<g font-family="Liberation Serif" font-weight="bold" fill="#00ff00" stroke="#000" stroke-width="1" paint-order="stroke">
<text x="17.5" y="13" font-size="12" text-anchor="middle" transform="rotate(-35 17 9)">Hot</text>
<text x="18" y="25.5" font-size="11" text-anchor="middle" letter-spacing="-.2">3D</text>
</g>
</svg>
<div class="t" style="left:1032.3px;top:1570px;font-size:13px;color:#ddd;transform:scaleX(0.9832);">Search</div>
<svg class="a" style="left:2330px;top:1560px;width:150px;height:32px" viewBox="2330 1560 150 32">
<path d="M2343.7 1578.6 L2349 1573 L2354.2 1578.6" fill="none" stroke="#fff" stroke-width="1.2"/>
<path d="M2375 1581 q-2 0 -2 -3 q0 -3 3 -3 q1 -4 5 -4 q3 0 4 2 q4 0 4 4 q0 4 -3 4z" fill="#9a9ea6"/>
<path d="M2375 1570 L2388 1583" stroke="#e8e8e8" stroke-width="1.2"/>
<path d="M2408 1578 a7 7 0 0 1 10 0 M2405 1575 a11 11 0 0 1 15 0 M2411 1581 a3 3 0 0 1 4 0" fill="none" stroke="#fff" stroke-width="1.3"/>
<circle cx="2413" cy="1581" r="1.2" fill="#fff"/>
<path d="M2408.5 1567.8 q2 1.5 3.8 1.5 v3.5 q0 3 -3.8 4.5 q-3.8 -1.5 -3.8 -4.5 v-3.5 q1.8 0 3.8 -1.5z" fill="#4cc2ff"/>
<path d="M2429.5 1573 h3 l4 -3 v12 l-4 -3 h-3z" fill="none" stroke="#fff" stroke-width="1.2"/>
<path d="M2438.5 1574 q1.5 2 0 4 M2441 1571.5 q3 4.5 0 9 M2443.5 1569.5 q4 6.5 0 13" fill="none" stroke="#fff" stroke-width="1" stroke-opacity=".9"/>
<path d="M2454 1572 v9 h10 M2457 1571 h10 v5" fill="none" stroke="#fff" stroke-width="1.3"/>
<path d="M2455 1568 l-2 4 h3 l-2 4" fill="none" stroke="#fff" stroke-width="1"/>
<path d="M2466 1584 l-3.5 -3.5 q-1.5 -2 0.5 -3 q1.5 -.5 3 1 q1.5 -1.5 3 -1 q2 1 .5 3z" fill="#fff"/>
</svg>
<div class="t" style="left:2490.9px;top:1563px;font-size:11.5px;color:#fff;transform:scaleX(1.0348);">11:42 AM</div>
<div class="t" style="left:2486px;top:1579px;font-size:11.5px;color:#fff;transform:scaleX(1.0750);">9/23/2025</div>
</body></html>
